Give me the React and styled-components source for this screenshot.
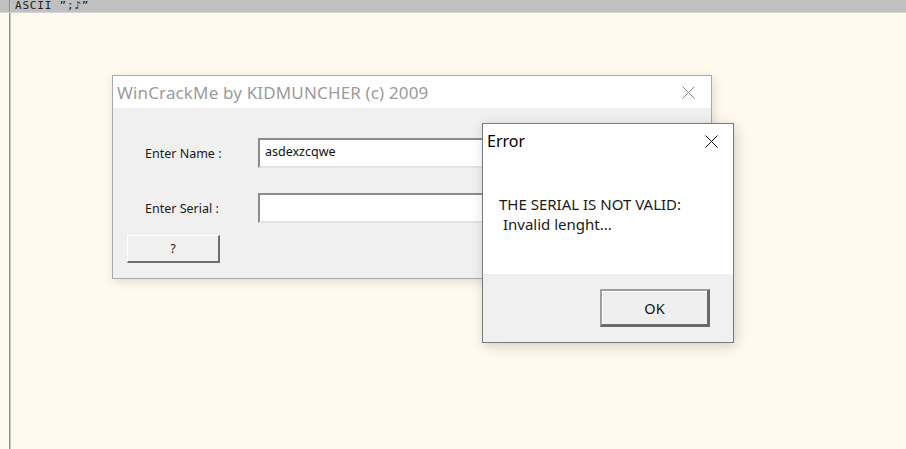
import React from 'react';
import styled, { createGlobalStyle } from 'styled-components';

const GlobalStyle = createGlobalStyle`
  html, body {
    margin: 0;
    padding: 0;
    width: 906px;
    height: 449px;
    overflow: hidden;
    background: #fff9ee;
  }
`;

const App = () => {
  return (
    <>
      <GlobalStyle />
      <StyledScreen>
        <StyledTopBar>
          <StyledGutter />
          <StyledLine />
          <StyledDump>ASCII ”;♪”</StyledDump>
        </StyledTopBar>
        <StyledDesktop>
          <StyledGutter />
          <StyledLine />
          <StyledCanvas>
            <StyledMainWindow>
              <StyledTitleBar>
                <StyledTitle>WinCrackMe by KIDMUNCHER (c) 2009</StyledTitle>
                <CloseIcon color="#8a8a8a" />
              </StyledTitleBar>
              <StyledForm>
                <StyledRow>
                  <StyledLabel>Enter Name :</StyledLabel>
                  <StyledInput>asdexzcqwe</StyledInput>
                </StyledRow>
                <StyledRow>
                  <StyledLabel>Enter Serial :</StyledLabel>
                  <StyledInput />
                </StyledRow>
                <StyledButton>?</StyledButton>
              </StyledForm>
            </StyledMainWindow>

            <StyledDialog>
              <StyledDialogTop>
                <StyledDialogHeader>
                  <StyledDialogTitle>Error</StyledDialogTitle>
                  <CloseIcon color="#111" />
                </StyledDialogHeader>
                <StyledMessage>
                  THE SERIAL IS NOT VALID:
                  <br />
                  &nbsp;Invalid lenght...
                </StyledMessage>
              </StyledDialogTop>
              <StyledDialogFooter>
                <StyledOkButton>OK</StyledOkButton>
              </StyledDialogFooter>
            </StyledDialog>
          </StyledCanvas>
        </StyledDesktop>
      </StyledScreen>
    </>
  );
};

const CloseIcon = ({ color }) => (
  <svg width="13" height="13" viewBox="0 0 13 13">
    <path d="M0.5 0.5 L12.5 12.5 M12.5 0.5 L0.5 12.5" stroke={color} strokeWidth="1" />
  </svg>
);

const StyledScreen = styled.div`
  display: flex;
  flex-direction: column;
  width: 906px;
  height: 449px;
`;

const StyledTopBar = styled.div`
  display: flex;
  height: 12px;
  background: #c0c0c0;
  border-bottom: 1px solid #d6d6d6;
`;

const StyledGutter = styled.div`
  width: 9px;
  flex: none;
`;

const StyledLine = styled.div`
  width: 2px;
  flex: none;
  background: linear-gradient(to right, #8f8f8f 50%, #c8c8c8 50%);
`;

const StyledDump = styled.div`
  padding-left: 4px;
  font-family: 'DejaVu Sans Mono', 'Liberation Mono', monospace;
  font-size: 11px;
  line-height: 11px;
  letter-spacing: 0.8px;
  color: #202020;
  white-space: pre;
`;

const StyledDesktop = styled.div`
  display: flex;
  flex: 1;
`;

const StyledCanvas = styled.div`
  position: relative;
  flex: 1;
`;

const StyledMainWindow = styled.div`
  position: absolute;
  left: 101px;
  top: 62px;
  width: 598px;
  display: flex;
  flex-direction: column;
  background: #f0f0f0;
  border: 1px solid #a9a9a9;
  box-shadow: 2px 3px 10px rgba(0, 0, 0, 0.12);
`;

const StyledTitleBar = styled.div`
  display: flex;
  align-items: center;
  justify-content: space-between;
  height: 32px;
  padding: 0 16px 0 4px;
  background: #fff;
`;

const StyledTitle = styled.div`
  font-family: 'Noto Sans', 'Open Sans', sans-serif;
  font-size: 17px;
  color: #9b9b9b;
  letter-spacing: 0.15px;
`;

const StyledForm = styled.div`
  display: flex;
  flex-direction: column;
  padding: 30px 0 15px 14px;
`;

const StyledRow = styled.div`
  display: flex;
  align-items: center;
  height: 30px;
  margin-bottom: 25px;
  &:nth-child(2) {
    margin-bottom: 12px;
  }
`;

const StyledLabel = styled.div`
  width: 131px;
  padding-left: 18px;
  box-sizing: border-box;
  font-family: 'Noto Sans', 'Open Sans', sans-serif;
  font-size: 12.5px;
  color: #1a1a1a;
`;

const StyledInput = styled.div`
  box-sizing: border-box;
  width: 300px;
  height: 30px;
  padding: 4px 5px;
  background: #fff;
  border-top: 2px solid #8c8c8c;
  border-left: 2px solid #8c8c8c;
  border-bottom: 2px solid #e3e3e3;
  border-right: 2px solid #e3e3e3;
  font-family: 'Noto Sans', 'Open Sans', sans-serif;
  font-size: 12.5px;
  line-height: 16px;
  color: #111;
`;

const StyledButton = styled.div`
  box-sizing: border-box;
  width: 93px;
  height: 28px;
  display: flex;
  align-items: center;
  justify-content: center;
  background: #f0f0f0;
  border-top: 1px solid #fff;
  border-left: 1px solid #fff;
  border-bottom: 2px solid #6e6e6e;
  border-right: 2px solid #6e6e6e;
  font-family: 'Noto Sans', 'Open Sans', sans-serif;
  font-size: 12px;
  color: #111;
`;

const StyledDialog = styled.div`
  position: absolute;
  left: 471px;
  top: 110px;
  width: 250px;
  height: 218px;
  display: flex;
  flex-direction: column;
  border: 1px solid #7a7a7a;
  background: #f0f0f0;
  box-shadow: 2px 3px 12px rgba(0, 0, 0, 0.18);
`;

const StyledDialogTop = styled.div`
  background: #fff;
  height: 150px;
  display: flex;
  flex-direction: column;
`;

const StyledDialogHeader = styled.div`
  display: flex;
  align-items: center;
  justify-content: space-between;
  height: 34px;
  padding: 0 15px 0 4px;
`;

const StyledDialogTitle = styled.div`
  font-family: 'Noto Sans', 'Open Sans', sans-serif;
  font-size: 16px;
  color: #000;
`;

const StyledMessage = styled.div`
  padding: 36px 0 0 16px;
  font-family: 'Noto Sans', 'Open Sans', sans-serif;
  font-size: 15px;
  line-height: 20px;
  color: #1a1a1a;
`;

const StyledDialogFooter = styled.div`
  flex: 1;
  display: flex;
  justify-content: flex-end;
  align-items: flex-start;
  padding: 15px 23px 0 0;
`;

const StyledOkButton = styled.div`
  box-sizing: border-box;
  width: 110px;
  height: 38px;
  display: flex;
  align-items: center;
  justify-content: center;
  background: #efefef;
  border-top: 2px solid #a0a0a0;
  border-left: 2px solid #a0a0a0;
  border-bottom: 3px solid #6a6a6a;
  border-right: 3px solid #6a6a6a;
  box-shadow: inset 1px 1px 0 #fff;
  font-family: 'Noto Sans', 'Open Sans', sans-serif;
  font-size: 14.5px;
  color: #111;
`;

export default App;
